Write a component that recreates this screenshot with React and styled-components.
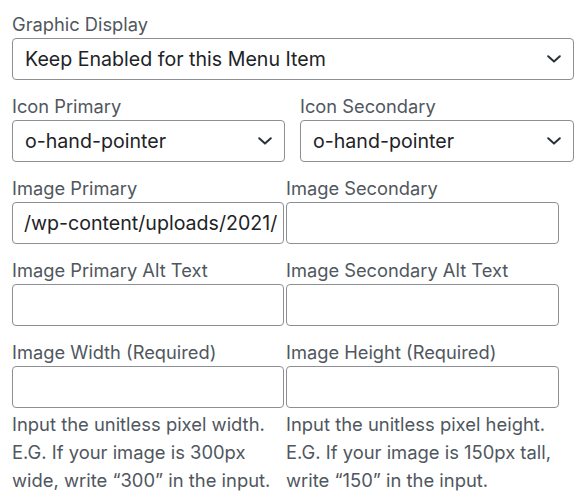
import styled, { createGlobalStyle } from 'styled-components';

const GlobalStyle = createGlobalStyle`
  body {
    margin: 0;
    background: #ffffff;
    font-family: Inter, 'Liberation Sans', Arial, sans-serif;
  }
`;

const Chevron = () => (
  <svg width="14" height="8" viewBox="0 0 14 8" fill="none">
    <path
      d="M1.2 1.2 L7 6.6 L12.8 1.2"
      stroke="#2c3338"
      strokeWidth="2"
      strokeLinecap="round"
      strokeLinejoin="round"
    />
  </svg>
);

const SelectField = ({ label, value }) => (
  <Field>
    <Label>{label}</Label>
    <SelectBox>
      <BoxText>{value}</BoxText>
      <Chevron />
    </SelectBox>
  </Field>
);

const InputField = ({ label, value, help }) => (
  <Field>
    <Label>{label}</Label>
    <InputBox>{value && <BoxText>{value}</BoxText>}</InputBox>
    {help && <Help>{help.map((line, i) => <div key={i}>{line}</div>)}</Help>}
  </Field>
);

const App = () => {
  return (
    <>
      <GlobalStyle />
      <Form>
        <Row>
          <SelectField label="Graphic Display" value="Keep Enabled for this Menu Item" />
        </Row>
        <Row $cols="273px 274px" $gap="15px">
          <SelectField label="Icon Primary" value="o-hand-pointer" />
          <SelectField label="Icon Secondary" value="o-hand-pointer" />
        </Row>
        <Row $cols="272px 273px" $gap="2px">
          <InputField label="Image Primary" value="/wp-content/uploads/2021/" />
          <InputField label="Image Secondary" />
        </Row>
        <Row $cols="272px 273px" $gap="2px">
          <InputField label="Image Primary Alt Text" />
          <InputField label="Image Secondary Alt Text" />
        </Row>
        <Row $cols="272px 273px" $gap="2px">
          <InputField
            label="Image Width (Required)"
            help={[
              'Input the unitless pixel width.',
              'E.G. If your image is 300px',
              'wide, write \u201c300\u201d in the input.',
            ]}
          />
          <InputField
            label="Image Height (Required)"
            help={[
              'Input the unitless pixel height.',
              'E.G. If your image is 150px tall,',
              'write \u201c150\u201d in the input.',
            ]}
          />
        </Row>
      </Form>
    </>
  );
};

export default App;

const Form = styled.form`
  display: flex;
  flex-direction: column;
  gap: 12px;
  width: 562px;
  padding: 10px 0 0 12px;
`;

const Row = styled.div`
  display: grid;
  grid-template-columns: ${(p) => p.$cols || '1fr'};
  column-gap: ${(p) => p.$gap || '0'};
`;

const Field = styled.div`
  display: flex;
  flex-direction: column;
  min-width: 0;
`;

const Label = styled.label`
  font-size: 18.3px;
  line-height: 28px;
  color: #50575e;
`;

const SelectBox = styled.div`
  box-sizing: border-box;
  height: 42px;
  display: flex;
  align-items: center;
  justify-content: space-between;
  padding: 0 12px 0 12px;
  border: 1px solid #8c8f94;
  border-radius: 4px;
  background: #ffffff;
`;

const InputBox = styled.div`
  box-sizing: border-box;
  height: 42px;
  display: flex;
  align-items: center;
  padding: 0 11px;
  border: 1px solid #8c8f94;
  border-radius: 4px;
  background: #ffffff;
  overflow: hidden;
`;

const BoxText = styled.span`
  font-size: 19.6px;
  color: #1d2327;
  white-space: nowrap;
`;

const Help = styled.div`
  margin-top: 2px;
  font-size: 18.4px;
  line-height: 28px;
  color: #50575e;
  white-space: nowrap;
`;
